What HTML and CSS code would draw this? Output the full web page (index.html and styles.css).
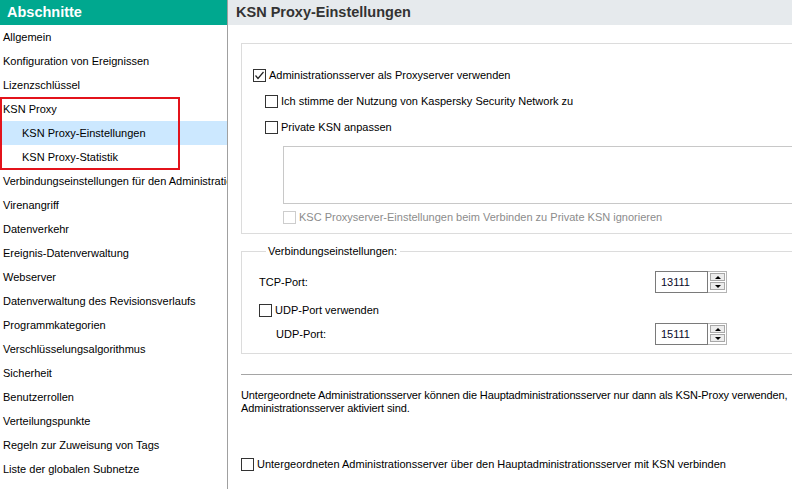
FILE: index.html
```html
<!DOCTYPE html>
<html lang="de">
<head>
<meta charset="utf-8">
<title>KSN Proxy-Einstellungen</title>
<link rel="stylesheet" href="styles.css">
</head>
<body>
<div class="app">
  <aside class="sidebar">
    <div class="side-head">Abschnitte</div>
    <ul class="nav">
      <li class="item">Allgemein</li>
      <li class="item">Konfiguration von Ereignissen</li>
      <li class="item">Lizenzschlüssel</li>
      <li class="group">
        <ul class="nav">
          <li class="item">KSN Proxy</li>
          <li class="item sub selected">KSN Proxy-Einstellungen</li>
          <li class="item sub">KSN Proxy-Statistik</li>
        </ul>
      </li>
      <li class="item">Verbindungseinstellungen für den Administrationsserver</li>
      <li class="item">Virenangriff</li>
      <li class="item">Datenverkehr</li>
      <li class="item">Ereignis-Datenverwaltung</li>
      <li class="item">Webserver</li>
      <li class="item">Datenverwaltung des Revisionsverlaufs</li>
      <li class="item">Programmkategorien</li>
      <li class="item">Verschlüsselungsalgorithmus</li>
      <li class="item">Sicherheit</li>
      <li class="item">Benutzerrollen</li>
      <li class="item">Verteilungspunkte</li>
      <li class="item">Regeln zur Zuweisung von Tags</li>
      <li class="item">Liste der globalen Subnetze</li>
      <li class="item">Anwendungsoptionen</li>
    </ul>
  </aside>
  <main class="main">
    <div class="main-head">KSN Proxy-Einstellungen</div>
    <div class="content">
      <div class="box box-ksn">
        <div class="row"><span class="cb"><svg viewBox="0 0 13 13" width="13" height="13"><polyline points="2.5,6.5 5,9.5 10.5,3" fill="none" stroke="#222" stroke-width="1.2"/></svg></span><span>Administrationsserver als Proxyserver verwenden</span></div>
        <div class="row lvl1"><span class="cb"></span><span>Ich stimme der Nutzung von Kaspersky Security Network zu</span></div>
        <div class="row lvl1"><span class="cb"></span><span>Private KSN anpassen</span></div>
        <div class="textarea"></div>
        <div class="row lvl2 disabled"><span class="cb"></span><span>KSC Proxyserver-Einstellungen beim Verbinden zu Private KSN ignorieren</span></div>
      </div>
      <fieldset class="box box-conn">
        <legend>Verbindungseinstellungen:</legend>
        <div class="port-row">
          <span class="port-label">TCP-Port:</span>
          <div class="spin"><span class="spin-val">13111</span><span class="spin-btns"><span class="sb"><i class="up"></i></span><span class="sb"><i class="down"></i></span></span></div>
        </div>
        <div class="row udp"><span class="cb"></span><span>UDP-Port verwenden</span></div>
        <div class="port-row udp-port">
          <span class="port-label indent">UDP-Port:</span>
          <div class="spin"><span class="spin-val">15111</span><span class="spin-btns"><span class="sb"><i class="up"></i></span><span class="sb"><i class="down"></i></span></span></div>
        </div>
      </fieldset>
      <div class="sep"></div>
      <p class="note">Untergeordnete Administrationsserver können die Hauptadministrationsserver nur dann als KSN-Proxy verwenden,<br>Administrationsserver aktiviert sind.</p>
      <div class="row last"><span class="cb"></span><span>Untergeordneten Administrationsserver über den Hauptadministrationsserver mit KSN verbinden</span></div>
    </div>
  </main>
</div>
</body>
</html>
```
FILE: styles.css
```css
html, body {
  margin: 0;
  padding: 0;
  width: 792px;
  height: 489px;
  overflow: hidden;
  background: #fff;
}
body {
  font-family: "Liberation Sans", Arial, sans-serif;
  font-size: 11px;
  color: #000;
}
.app {
  display: flex;
  height: 489px;
}
.sidebar {
  width: 227px;
  flex: none;
  border-right: 1px solid #a0a0a0;
  overflow: hidden;
}
.side-head {
  height: 25px;
  line-height: 24px;
  background: #00a88f;
  color: #fff;
  font-weight: bold;
  font-size: 14.5px;
  padding-left: 7px;
}
.nav {
  list-style: none;
  margin: 0;
  padding: 0;
}
.item {
  height: 24px;
  line-height: 24px;
  padding-left: 3px;
  white-space: nowrap;
  overflow: hidden;
}
.item.sub {
  padding-left: 22px;
}
.item.selected {
  background: #cce8ff;
}
.group {
  position: relative;
}
.group::after {
  content: "";
  position: absolute;
  left: 0;
  top: 0;
  width: 176px;
  height: 69px;
  border: 2px solid #e3131b;
  pointer-events: none;
}
.main {
  flex: 1;
  min-width: 0;
  overflow: hidden;
}
.main-head {
  height: 25px;
  line-height: 24px;
  background: #e6eaed;
  color: #333;
  font-weight: bold;
  font-size: 14.5px;
  padding-left: 8px;
}
.content {
  padding: 18px 0 0 13px;
}
.box {
  border: 1px solid #dcdcdc;
  margin: 0 -20px 0 0;
}
.box-ksn {
  padding: 18px 0 0 11px;
  height: 191px;
  box-sizing: border-box;
}
.row {
  display: flex;
  align-items: center;
  height: 26px;
  white-space: nowrap;
}
.cb {
  width: 11px;
  height: 11px;
  border: 1px solid #333;
  background: #fff;
  margin-right: 3px;
  flex: none;
  display: flex;
}
.cb svg {
  margin: -1px;
}
.lvl1 {
  margin-left: 12px;
}
.textarea {
  margin: 6px 0 0 30px;
  height: 56px;
  border: 1px solid #c8c8c8;
  border-right: none;
}
.lvl2 {
  margin-left: 30px;
}
.disabled {
  color: #8c8c8c;
}
.disabled .cb {
  border-color: #cdcdcd;
}
.box-conn {
  margin-top: 10px;
  padding: 12px 0 7px 17px;
  min-width: 0;
}
.box-conn legend {
  padding: 0 3px 0 2px;
  margin-left: 7px;
  line-height: 14px;
}
.port-row {
  display: flex;
  align-items: center;
  height: 24px;
}
.port-label {
  width: 396px;
  flex: none;
}
.port-label.indent {
  padding-left: 17px;
  width: 379px;
}
.udp {
  height: 20px;
  margin-top: 6px;
}
.udp-port {
  margin-top: 2px;
}
.spin {
  display: flex;
  width: 72px;
  height: 22px;
  box-sizing: border-box;
  border: 1px solid #b4b4b4;
}
.spin-val {
  width: 54px;
  box-sizing: border-box;
  border: 1px solid #7a7a7a;
  margin: -1px 0 -1px -1px;
  padding-left: 5px;
  line-height: 20px;
  color: #0a0a2a;
}
.spin-btns {
  display: flex;
  flex-direction: column;
  padding: 1px 1px 1px 2px;
  gap: 1px;
}
.sb {
  width: 15px;
  height: 8px;
  box-sizing: border-box;
  border: 1px solid #a8a8a8;
  background: #ececec;
  display: flex;
  align-items: center;
  justify-content: center;
}
.sb i {
  width: 0;
  height: 0;
  border-left: 3px solid transparent;
  border-right: 3px solid transparent;
}
.sb i.up {
  border-bottom: 3px solid #000;
}
.sb i.down {
  border-top: 3px solid #000;
}
.sep {
  margin-top: 20px;
  height: 1px;
  background: #a5a5a5;
}
.note {
  margin: 14px 0 0 0;
  line-height: 13px;
  white-space: nowrap;
  letter-spacing: -0.12px;
}
.last {
  margin-top: 36px;
}
```
